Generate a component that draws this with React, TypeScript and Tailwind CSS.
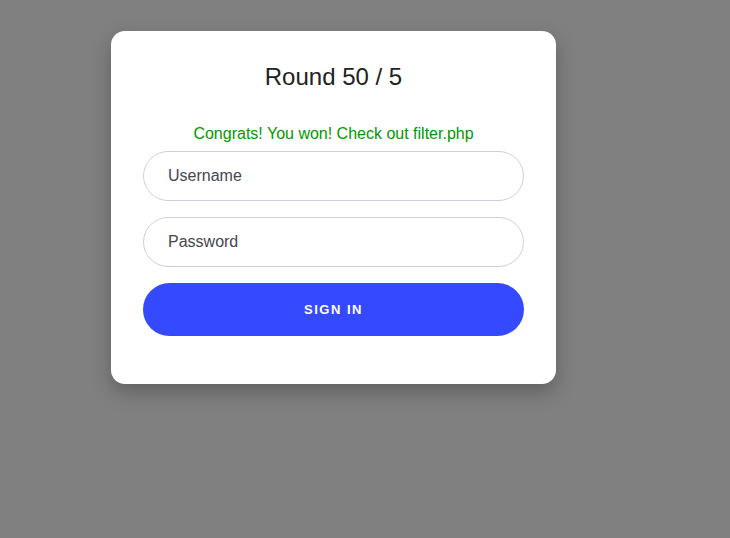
export default function App() {
  return (
    <div className="min-h-[538px] w-full bg-[#808080] pt-[31px] pl-[111px]" style={{ fontFamily: '"Liberation Sans", Arial, sans-serif' }}>
      <div className="w-[445px] rounded-[14px] bg-white px-[32px] pt-[32px] pb-[48px] shadow-[0_8px_20px_rgba(0,0,0,0.25)]">
        <h1 className="text-center text-[24px] leading-[28px] text-[#222]">Round 50 / 5</h1>
        <p className="mt-[34px] text-center text-[16px] leading-[18px] text-[#009900]">Congrats! You won! Check out filter.php</p>
        <div className="mt-[8px] flex flex-col gap-[16px]">
          <input
            placeholder="Username"
            className="h-[50px] w-full rounded-full border border-[#ccd0d8] bg-white px-[24px] text-[16px] text-[#454650] placeholder:text-[#454650] outline-none"
          />
          <input
            placeholder="Password"
            type="password"
            className="h-[50px] w-full rounded-full border border-[#ccd0d8] bg-white px-[24px] text-[16px] text-[#454650] placeholder:text-[#454650] outline-none"
          />
          <button className="h-[53px] w-full rounded-full bg-[#3549ff] text-[13px] font-bold tracking-[1.5px] text-white">
            SIGN IN
          </button>
        </div>
      </div>
    </div>
  );
}
